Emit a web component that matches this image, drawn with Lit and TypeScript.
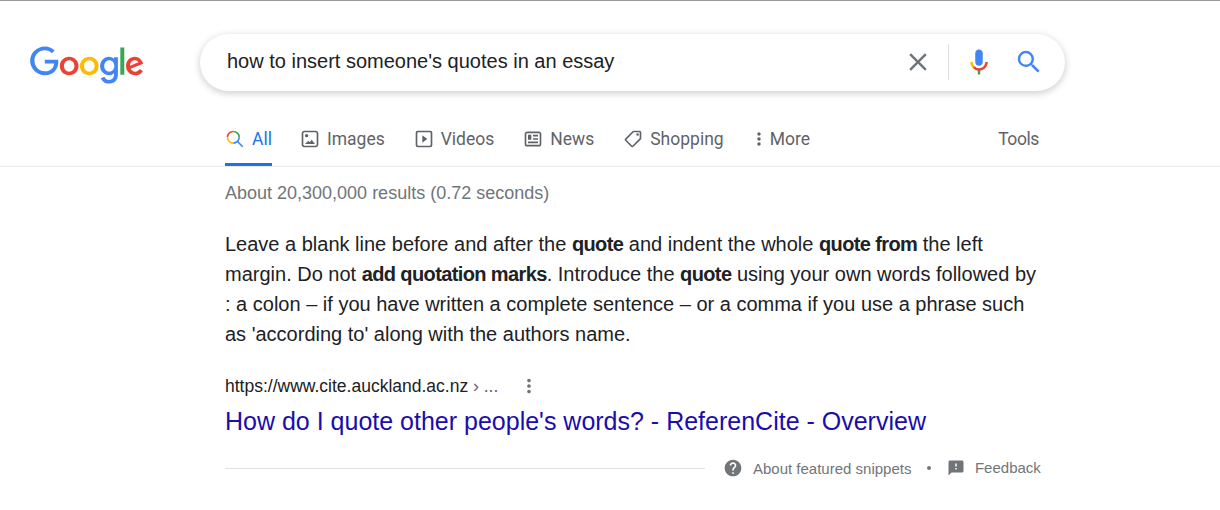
import { LitElement, html, css, svg } from "lit";
import { customElement } from "lit/decorators.js";

const icon = (content: unknown, cls: string) => html`<svg class=${cls} viewBox="0 0 24 24">${content}</svg>`;

const tabIcons: Record<string, unknown> = {
  Images: svg`<path d="M14 13l4 5H6l4-4 1.79 1.78L14 13zm-6.01-2.99A2 2 0 0 0 8 6a2 2 0 0 0-.01 4.01zM22 5v14a3 3 0 0 1-3 2.99H5c-1.64 0-3-1.36-3-3V5c0-1.64 1.36-3 3-3h14c1.65 0 3 1.36 3 3zm-2.01 0a1 1 0 0 0-1-1H5a1 1 0 0 0-1 1v14a1 1 0 0 0 1 1h7v-.01h7a1 1 0 0 0 1-1V5z"/>`,
  Videos: svg`<path d="M10 16.5l6-4.5-6-4.5v9zM5 20h14a1 1 0 0 0 1-1V5a1 1 0 0 0-1-1H5a1 1 0 0 0-1 1v14a1 1 0 0 0 1 1zm14.5 2H5a3 3 0 0 1-3-3V4.4A2.4 2.4 0 0 1 4.4 2h15.2A2.4 2.4 0 0 1 22 4.4v15.1a2.5 2.5 0 0 1-2.5 2.5z"/>`,
  News: svg`<path d="M12 11h6v2h-6v-2zm-6 6h12v-2H6v2zm0-4h4V7H6v6zm16-7.22v12.44c0 1.54-1.34 2.78-3 2.78H5c-1.64 0-3-1.25-3-2.78V5.78C2 4.26 3.36 3 5 3h14c1.64 0 3 1.25 3 2.78zM19.99 12V5.78c0-.42-.45-.78-1-.78H5c-.55 0-1 .36-1 .78v12.44c0 .42.45.78 1 .78h14c.55 0 1-.36 1-.78V12zM12 9h6V7h-6v2z"/>`,
  Shopping: svg`<g transform="matrix(-1 0 0 1 24 0)"><path d="M21.41 11.41l-8.83-8.83c-.37-.37-.88-.58-1.41-.58H4c-1.1 0-2 .9-2 2v7.17c0 .53.21 1.04.59 1.41l8.83 8.83c.78.78 2.05.78 2.83 0l7.17-7.17c.78-.78.78-2.04-.01-2.83zM12.83 20L4 11.17V4h7.17L20 12.83 12.83 20z"/><circle cx="6.5" cy="6.5" r="1.5"/></g>`,
};

@customElement("app-root")
export class AppRoot extends LitElement {
  static styles = css`
    :host { display: block; width: 1220px; height: 510px; box-sizing: border-box; border-top: 1px solid #9a9a9a; background: #fff; overflow: hidden; font-family: "Liberation Sans", Arial, sans-serif; color: #202124; }
    .header { display: flex; align-items: center; padding: 33px 0 0 30px; }
    .logo { width: 114px; height: 39px; margin: 6px 56px 0 0; flex: none; }
    .search { flex: none; width: 865px; height: 57px; box-sizing: border-box; border-radius: 29px; background: #fff; box-shadow: 0 2px 6px 1px rgba(64,60,67,.22); display: flex; align-items: center; padding: 0 21px 2px 27px; }
    .query { flex: 1; font-size: 20px; color: #202124; }
    .sicon { width: 30px; height: 30px; flex: none; display: block; }
    .clear { fill: #70757a; margin-right: 15px; }
    .divider { width: 1px; height: 36px; background: #dfe1e5; margin-right: 15px; }
    .mic { margin-right: 20px; }
    .glass { fill: #4285f4; }
    .tabs { display: flex; align-items: flex-end; height: 76px; padding: 0 181px 0 225px; border-bottom: 1px solid #ebebeb; font-family: Roboto, sans-serif; font-size: 17.5px; color: #5f6368; box-sizing: border-box; }
    .tab { display: flex; align-items: center; height: 47px; box-sizing: border-box; padding-bottom: 8px; margin-right: 29px; white-space: nowrap; }
    .tab.on { color: #1a73e8; border-bottom: 3px solid #1a73e8; padding-bottom: 5px; margin-right: 28px; }
    .tabicon { width: 20px; height: 20px; fill: #5f6368; margin-right: 7px; flex: none; display: block; }
    .tab.dotted { margin-left: -4px; }
    .tab.dotted .tabicon { margin-right: 1px; }
    .tab.tools { margin-left: auto; margin-right: 0; letter-spacing: -0.4px; }
    .content { padding: 0 180px 0 225px; }
    .stats { font-size: 18px; color: #70757a; line-height: 20px; padding-top: 16px; }
    .snippet { margin: 26px 0 0; font-size: 20px; line-height: 30px; color: #202124; }
    .snippet b { font-weight: 700; letter-spacing: -0.62px; }
    .cite { display: flex; align-items: center; margin-top: 25px; height: 24px; font-size: 17.5px; color: #202124; }
    .cite .crumb { color: #5f6368; }
    .dots { width: 22px; height: 22px; fill: #70757a; margin-left: 20px; display: block; }
    .title { font-size: 25px; line-height: 32px; color: #1a0dab; margin-top: 7px; white-space: nowrap; }
    .foot { display: flex; align-items: center; margin-top: 19px; height: 24px; color: #70757a; font-size: 15px; white-space: nowrap; }
    .rule { width: 480px; height: 1px; background: #dfe1e5; margin-right: 18.3px; flex: none; }
    .ficon { fill: #70757a; flex: none; display: block; }
    .ficon.q { width: 20px; height: 20px; margin-right: 9.7px; }
    .bullet { width: 4px; height: 4px; border-radius: 50%; background: #70757a; margin: 0 15.5px 0 16px; flex: none; }
    .ficon.f { width: 18px; height: 18px; margin-right: 10px; }
    .fb { margin-bottom: 2px; }
  `;

  render() {
    const tabs = ["Images", "Videos", "News", "Shopping"];
    return html`
      <div class="header">
        <svg class="logo" viewBox="0 0 272 92">
          <path fill="#EA4335" d="M115.75 47.18c0 12.77-9.99 22.18-22.25 22.18s-22.25-9.41-22.25-22.18C71.25 34.32 81.24 25 93.5 25s22.25 9.32 22.25 22.18zm-9.74 0c0-7.98-5.79-13.44-12.51-13.44S80.99 39.2 80.99 47.18c0 7.9 5.79 13.44 12.51 13.44s12.51-5.55 12.51-13.44z"/>
          <path fill="#FBBC05" d="M163.75 47.18c0 12.77-9.99 22.18-22.25 22.18s-22.25-9.41-22.25-22.18c0-12.85 9.99-22.18 22.25-22.18s22.25 9.32 22.25 22.18zm-9.74 0c0-7.98-5.79-13.44-12.51-13.44s-12.51 5.46-12.51 13.44c0 7.9 5.79 13.44 12.51 13.44s12.51-5.55 12.51-13.44z"/>
          <path fill="#4285F4" d="M209.75 26.34v39.82c0 16.38-9.66 23.07-21.08 23.07-10.75 0-17.22-7.19-19.66-13.07l8.48-3.53c1.51 3.61 5.21 7.87 11.17 7.87 7.31 0 11.84-4.51 11.84-13v-3.19h-.34c-2.18 2.69-6.38 5.04-11.68 5.04-11.09 0-21.25-9.66-21.25-22.09 0-12.52 10.16-22.26 21.25-22.26 5.29 0 9.49 2.35 11.68 4.96h.34v-3.61h9.25zm-8.56 20.92c0-7.81-5.21-13.52-11.84-13.52-6.72 0-12.35 5.71-12.35 13.52 0 7.73 5.63 13.36 12.35 13.36 6.63 0 11.84-5.63 11.84-13.36z"/>
          <path fill="#34A853" d="M225 3v65h-9.5V3h9.5z"/>
          <path fill="#EA4335" d="M262.02 54.48l7.56 5.04c-2.44 3.61-8.32 9.83-18.48 9.83-12.6 0-22.01-9.74-22.01-22.18 0-13.19 9.49-22.18 20.92-22.18 11.51 0 17.14 9.16 18.98 14.11l1.01 2.52-29.65 12.28c2.27 4.45 5.8 6.72 10.75 6.72 4.96 0 8.4-2.44 10.92-6.14zm-23.27-7.98l19.82-8.23c-1.09-2.77-4.37-4.7-8.23-4.7-4.95 0-11.84 4.37-11.59 12.93z"/>
          <path fill="#4285F4" d="M35.29 41.41V32H67c.31 1.64.47 3.58.47 5.68 0 7.06-1.93 15.79-8.15 22.01-6.05 6.3-13.78 9.66-24.02 9.66C16.32 69.35.36 53.89.36 34.91.36 15.93 16.32.47 35.3.47c10.5 0 17.98 4.12 23.6 9.49l-6.64 6.64c-4.03-3.78-9.49-6.72-16.97-6.72-13.86 0-24.7 11.17-24.7 25.03 0 13.86 10.84 25.03 24.7 25.03 8.99 0 14.11-3.61 17.39-6.89 2.66-2.66 4.41-6.46 5.1-11.65l-22.49.01z"/>
        </svg>
        <div class="search">
          <div class="query">how to insert someone's quotes in an essay</div>
          ${icon(svg`<path d="M19 6.41L17.59 5 12 10.59 6.41 5 5 6.41 10.59 12 5 17.59 6.41 19 12 13.41 17.59 19 19 17.59 13.41 12z"/>`, "sicon clear")}
          <div class="divider"></div>
          ${icon(svg`<path fill="#4285f4" d="m12 15c1.66 0 3-1.31 3-2.97v-7.02c0-1.66-1.34-3.01-3-3.01s-3 1.34-3 3.01v7.02c0 1.66 1.34 2.97 3 2.97z"/><path fill="#34a853" d="m11 18.08h2v3.92h-2z"/><path fill="#fbbc05" d="m7.05 16.87c-1.27-1.33-2.05-2.83-2.05-4.87h2c0 1.45 0.56 2.42 1.47 3.38v0.32l-1.15 1.18z"/><path fill="#ea4335" d="m12 16.93a4.97 5.25 0 0 1 -3.54 -1.55l-1.41 1.49c1.26 1.34 3.02 2.13 4.95 2.13 3.87 0 6.99-2.92 6.99-6.99h-1.99c0 2.92-2.24 4.92-5 4.92z"/>`, "sicon mic")}
          ${icon(svg`<path d="M15.5 14h-.79l-.28-.27A6.471 6.471 0 0 0 16 9.5 6.5 6.5 0 1 0 9.5 16c1.61 0 3.09-.59 4.23-1.57l.27.28v.79l5 4.99L20.49 19l-4.99-5zm-6 0C7.01 14 5 11.99 5 9.5S7.01 5 9.5 5 14 7.01 14 9.5 11.99 14 9.5 14z"/>`, "sicon glass")}
        </div>
      </div>
      <div class="tabs">
        <div class="tab on">
          ${icon(svg`<path fill="#34A853" d="M10 2v2a6 6 0 0 1 6 6h2a8 8 0 0 0-8-8"/><path fill="#EA4335" d="M10 4V2a8 8 0 0 0-8 8h2c0-3.4 2.6-6 6-6"/><path fill="#FBBC04" d="M4 10H2a8 8 0 0 0 8 8v-2c-3.4 0-6-2.6-6-6"/><path fill="#4285F4" d="M22 20.59l-5.69-5.69A7.96 7.96 0 0 0 18 10h-2a6 6 0 0 1-6 6v2c1.85 0 3.55-.63 4.9-1.69l5.69 5.69L22 20.59"/>`, "tabicon")}
          All
        </div>
        ${tabs.map((t) => html`<div class="tab">${icon(tabIcons[t], "tabicon")}${t}</div>`)}
        <div class="tab dotted">
          ${icon(svg`<path d="M12 8c1.1 0 2-.9 2-2s-.9-2-2-2-2 .9-2 2 .9 2 2 2zm0 2c-1.1 0-2 .9-2 2s.9 2 2 2 2-.9 2-2-.9-2-2-2zm0 6c-1.1 0-2 .9-2 2s.9 2 2 2 2-.9 2-2-.9-2-2-2z"/>`, "tabicon")}
          More
        </div>
        <div class="tab tools">Tools</div>
      </div>
      <div class="content">
        <div class="stats">About 20,300,000 results (0.72 seconds)</div>
        <p class="snippet">Leave a blank line before and after the <b>quote</b> and indent the whole <b>quote from</b> the left margin. Do not <b>add quotation marks</b>. Introduce the <b>quote</b> using your own words followed by : a colon – if you have written a complete sentence – or a comma if you use a phrase such as 'according to' along with the authors name.</p>
        <div class="cite">
          <span>https://www.cite.auckland.ac.nz <span class="crumb">› ...</span></span>
          ${icon(svg`<path d="M12 8c1.1 0 2-.9 2-2s-.9-2-2-2-2 .9-2 2 .9 2 2 2zm0 2c-1.1 0-2 .9-2 2s.9 2 2 2 2-.9 2-2-.9-2-2-2zm0 6c-1.1 0-2 .9-2 2s.9 2 2 2 2-.9 2-2-.9-2-2-2z"/>`, "dots")}
        </div>
        <div class="title">How do I quote other people's words? - ReferenCite - Overview</div>
        <div class="foot">
          <div class="rule"></div>
          ${icon(svg`<path d="M12 2C6.48 2 2 6.48 2 12s4.48 10 10 10 10-4.48 10-10S17.52 2 12 2zm1 17h-2v-2h2v2zm2.07-7.75l-.9.92C13.45 12.9 13 13.5 13 15h-2v-.5c0-1.1.45-2.1 1.17-2.83l1.24-1.26c.37-.36.59-.86.59-1.41 0-1.1-.9-2-2-2s-2 .9-2 2H8c0-2.21 1.79-4 4-4s4 1.79 4 4c0 .88-.36 1.68-.93 2.25z"/>`, "ficon q")}
          <span>About featured snippets</span>
          <div class="bullet"></div>
          ${icon(svg`<path d="M20 2H4c-1.1 0-1.99.9-1.99 2L2 22l4-4h14c1.1 0 2-.9 2-2V4c0-1.1-.9-2-2-2zm-7 12h-2v-2h2v2zm0-4h-2V6h2v4z"/>`, "ficon f")}
          <span class="fb">Feedback</span>
        </div>
      </div>
    `;
  }
}
